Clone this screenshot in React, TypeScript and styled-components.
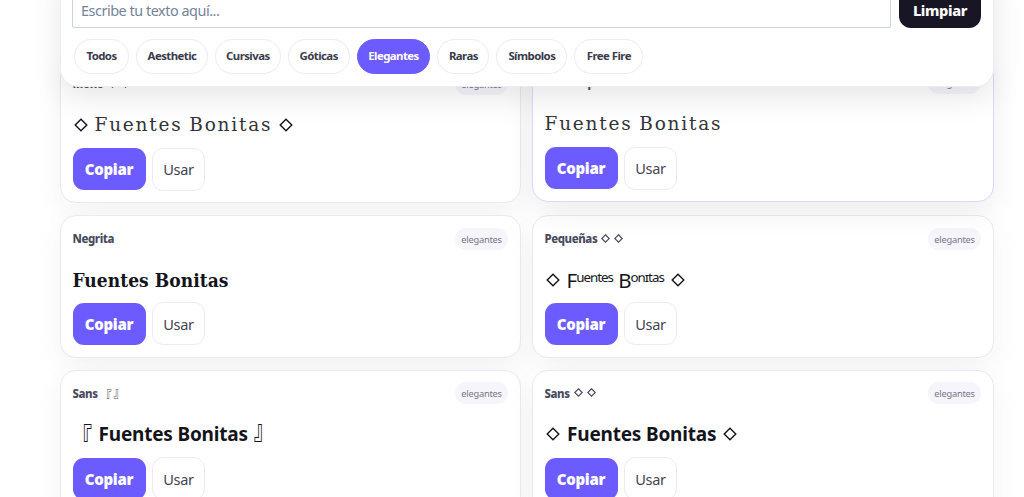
import React from "react";
import styled, { createGlobalStyle } from "styled-components";

const GlobalStyle = createGlobalStyle`
  * { box-sizing: border-box; }
  html, body { margin: 0; height: 497px; overflow: hidden; background: #fff; }
  body { font-family: "Noto Sans", "Open Sans", "Noto Sans CJK JP", sans-serif; color: #14141c; }
  button, input { font-family: inherit; margin: 0; }
`;

const Page = styled.main`
  position: relative;
  width: 1024px;
  height: 497px;
  overflow: hidden;
  padding: 60.6px 30px 0 60px;
`;

const Toolbar = styled.header`
  position: absolute;
  z-index: 2;
  top: -30px;
  left: 60px;
  width: 934px;
  height: 116.5px;
  padding: 0 12px 0 11px;
  background: #fff;
  border: 1px solid #ececf4;
  border-radius: 18px;
  box-shadow: 0 10px 30px rgba(0, 0, 0, 0.1);
`;

const SearchRow = styled.div`
  display: flex;
  gap: 8px;
  height: 45px;
  margin-top: 12px;
`;

const TextInput = styled.input`
  width: 819px;
  height: 45px;
  padding: 10px 8px 0;
  border: 1px solid #cbd5e1;
  border-radius: 2px;
  background: #fff;
  font-size: 14.4px;
  letter-spacing: -0.46px;
  outline: none;
  &::placeholder { color: #75839a; opacity: 1; }
`;

const ClearButton = styled.button`
  width: 82px;
  height: 45px;
  padding: 8px 0 0;
  border: 0;
  border-radius: 12px;
  background: #181624;
  color: #fff;
  font-size: 14.6px;
  font-weight: 800;
  letter-spacing: -0.35px;
`;

const Chips = styled.nav`
  display: flex;
  gap: 7px;
  padding: 11px 2px 0;
`;

const Chip = styled.button<{ $w: number; $active?: boolean }>`
  flex: none;
  width: ${(p) => p.$w}px;
  height: 35px;
  padding: 0 0 2px;
  border: 1px solid ${(p) => (p.$active ? "#6c5cff" : "#ececf4")};
  border-radius: 18px;
  background: ${(p) => (p.$active ? "#6c5cff" : "#fff")};
  color: ${(p) => (p.$active ? "#fff" : "#3a3a4c")};
  font-size: 11.4px;
  font-weight: 700;
  letter-spacing: -0.55px;
  white-space: nowrap;
`;

const Grid = styled.section`
  display: grid;
  grid-template-columns: 461px 462px;
  gap: 12px 11px;
`;

const Card = styled.article<{ $hover?: boolean }>`
  height: 142.8px;
  padding: 11.2px 12px 11px 11.5px;
  border: 1px solid ${(p) => (p.$hover ? "#dcd7ff" : "#e9e9f2")};
  border-radius: 16px;
  background: #fff;
  box-shadow: 0 10px 30px rgba(0, 0, 0, ${(p) => (p.$hover ? 0.07 : 0.05)});
  transform: ${(p) => (p.$hover ? "translateY(-1px)" : "none")};
`;

const CardHead = styled.div`
  display: flex;
  align-items: center;
  justify-content: space-between;
  height: 22px;
`;

const Label = styled.span`
  display: flex;
  align-items: center;
  gap: 4px;
  color: #4a4a5e;
  font-size: 11.4px;
  font-weight: 800;
  letter-spacing: -0.4px;
  white-space: pre;
`;

const Tag = styled.span`
  width: 53px;
  height: 22px;
  border-radius: 11px;
  background: #f5f5fb;
  color: #77778a;
  font-size: 9.3px;
  line-height: 23px;
  letter-spacing: -0.25px;
  text-align: center;
`;

const Sample = styled.div`
  display: flex;
  align-items: center;
  gap: 6.5px;
  height: 38px;
  margin-top: 11px;
  white-space: pre;
`;

const faces = {
  mono: `font-family: "DejaVu Serif", serif; font-size: 18.5px; font-weight: 400; letter-spacing: 1.8px; word-spacing: -1px; color: #33333a;`,
  serif: `font-family: "DejaVu Serif Condensed", "DejaVu Serif", serif; font-stretch: condensed; font-size: 19px; font-weight: 700; letter-spacing: 0.05px;`,
  small: `font-size: 20.5px; letter-spacing: -1px; word-spacing: 1px; font-weight: 450;`,
  sans: `font-size: 19px; font-weight: 700; letter-spacing: -0.2px; padding-left: 0.5px;`,
};

const Face = styled.span<{ $face: keyof typeof faces }>`
  ${(p) => faces[p.$face]}
`;

const DiamondIcon = styled.svg<{ $big?: boolean; $end?: boolean }>`
  flex: none;
  width: ${(p) => (p.$big ? 14 : 9)}px;
  height: ${(p) => (p.$big ? 14 : 9)}px;
  margin-left: ${(p) => (p.$big ? (p.$end ? 0.5 : 1.5) : 0)}px;
  margin-top: ${(p) => (p.$big ? 0 : -1)}px;
`;

const Bracket = styled.span<{ $big?: boolean; $end?: boolean }>`
  display: inline-block;
  font-family: "Noto Sans CJK JP", sans-serif;
  font-size: ${(p) => (p.$big ? 20 : 11)}px;
  line-height: 1;
  font-weight: 500;
  letter-spacing: 0;
  margin: ${(p) => (p.$big ? "0 -0.5px" : "0 -1px")};
  transform: translateY(${(p) => (p.$end ? (p.$big ? -5 : -2) : 2)}px) scaleY(1.25);
`;

const Actions = styled.div`
  display: flex;
  gap: 6.5px;
  margin-top: 4.4px;
`;

const CopyButton = styled.button`
  width: 73px;
  height: 42px;
  padding: 0;
  border: 0;
  border-radius: 11px;
  background: #6c5cff;
  color: #fff;
  font-size: 15px;
  font-weight: 900;
  letter-spacing: -0.3px;
`;

const UseButton = styled.button`
  width: 53px;
  height: 43px;
  padding: 0;
  margin-top: -0.5px;
  border: 1px solid #ececf4;
  border-radius: 11px;
  background: #fff;
  color: #444450;
  font-size: 14.6px;
  letter-spacing: -0.3px;
`;

const chips = [
  { text: "Todos", w: 55 },
  { text: "Aesthetic", w: 72 },
  { text: "Cursivas", w: 65.7 },
  { text: "Góticas", w: 62 },
  { text: "Elegantes", w: 73.7, active: true },
  { text: "Raras", w: 52 },
  { text: "Símbolos", w: 71 },
  { text: "Free Fire", w: 69 },
];

type Wrap = "diamond" | "bracket";
const cards: { label: string; text: string; face: keyof typeof faces; wrap?: Wrap; hover?: boolean }[] = [
  { label: "Mono", text: "Fuentes Bonitas", face: "mono", wrap: "diamond" },
  { label: "Monoespaciado", text: "Fuentes Bonitas", face: "mono", hover: true },
  { label: "Negrita", text: "Fuentes Bonitas", face: "serif" },
  { label: "Pequeñas", text: "Fᵘᵉⁿᵗᵉˢ Bᵒⁿᶦᵗᵃˢ", face: "small", wrap: "diamond" },
  { label: "Sans", text: "Fuentes Bonitas", face: "sans", wrap: "bracket" },
  { label: "Sans", text: "Fuentes Bonitas", face: "sans", wrap: "diamond" },
];

const Mark = ({ wrap, end, big }: { wrap?: Wrap; end?: boolean; big?: boolean }) => {
  if (wrap === "diamond")
    return (
      <DiamondIcon $big={big} $end={end} viewBox="0 0 14 14" fill="none" stroke="currentColor" strokeWidth={big ? 1.4 : 1.8}>
        <path d="M7 1.2 12.8 7 7 12.8 1.2 7Z" />
      </DiamondIcon>
    );
  if (wrap === "bracket") return <Bracket $big={big} $end={end}>{end ? "』" : "『"}</Bracket>;
  return null;
};

export default function App() {
  return (
    <>
      <GlobalStyle />
      <Page>
        <Toolbar>
          <SearchRow>
            <TextInput placeholder="Escribe tu texto aquí..." />
            <ClearButton>Limpiar</ClearButton>
          </SearchRow>
          <Chips>
            {chips.map((c) => (
              <Chip key={c.text} $w={c.w} $active={c.active}>{c.text}</Chip>
            ))}
          </Chips>
        </Toolbar>
        <Grid>
          {cards.map((c, i) => (
            <Card key={i} $hover={c.hover}>
              <CardHead>
                <Label>
                  <span>{c.label}</span>
                  <Mark wrap={c.wrap} />
                  <Mark wrap={c.wrap} end />
                </Label>
                <Tag>elegantes</Tag>
              </CardHead>
              <Sample>
                <Mark wrap={c.wrap} big />
                <Face $face={c.face}>{c.text}</Face>
                <Mark wrap={c.wrap} end big />
              </Sample>
              <Actions>
                <CopyButton>Copiar</CopyButton>
                <UseButton>Usar</UseButton>
              </Actions>
            </Card>
          ))}
        </Grid>
      </Page>
    </>
  );
}
